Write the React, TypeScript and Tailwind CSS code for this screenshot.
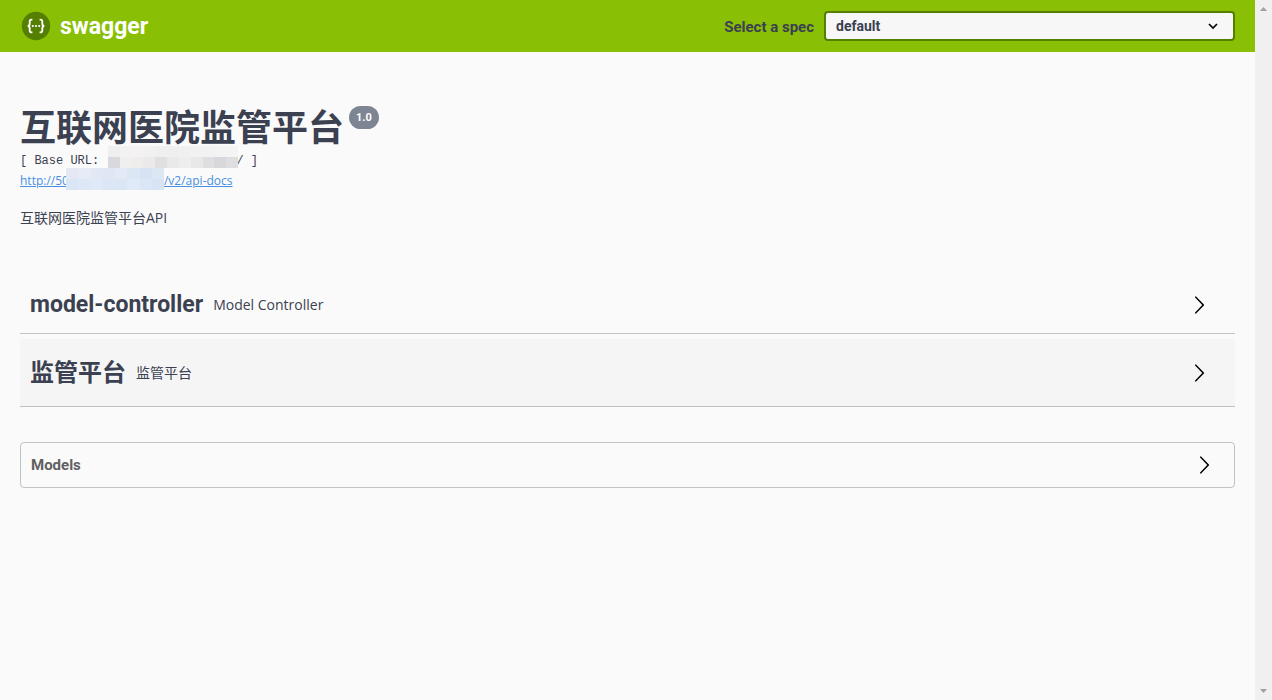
import type { ReactNode } from "react";

const tags = [
  { name: "model-controller", description: "Model Controller", rowClass: "h-[54px] pb-[3px]", nameClass: "text-[23px]" },
  { name: "监管平台", description: "监管平台", rowClass: "h-[68px] bg-black/[0.02]", nameClass: "text-2xl" },
];

const hostTop = ["#efefef", "#f2f2f2", "#f3f1f1", "#f1f1f1", "#efefef", "#efeff0", "#f0f0f0", "#f1f1f1", "#f2f2f2", "#f3f3f3", "#f4f4f4"];
const hostBottom = ["#d9d8dc", "#f0eeee", "#efedec", "#ebe9e9", "#e0dfe2", "#e9e9e9", "#eeeeee", "#e9e8e8", "#dfdee1", "#d8d7dc", "#dedde0"];
const linkTop = ["#e3e8f4", "#e6ebf6", "#e1e8f4", "#dfe7f4", "#e2eaf6", "#dde6f4", "#d7e2f4", "#dde6f3"];
const linkBottom = ["#dbe6f4", "#dde8f6", "#dfe9f7", "#dce7f6", "#dbe6f5", "#dfe9f7", "#dae6f5", "#d8e3f3"];

function Mosaic({ rows, className }: { rows: string[][]; className: string }) {
  return (
    <svg className={className} viewBox={`0 0 ${rows[0].length * 12} 24`} preserveAspectRatio="none" shapeRendering="crispEdges" aria-hidden="true">
      {rows.map((row, y) =>
        row.map((fill, x) => <rect key={`${x}-${y}`} x={x * 12} y={y * 12} width="12" height="12" fill={fill} />),
      )}
    </svg>
  );
}

function Arrow() {
  return (
    <svg className="h-5 w-5 shrink-0" viewBox="0 0 20 20" aria-hidden="true">
      <path
        fill="#000"
        d="M13.25 10L6.109 2.58c-.268-.27-.268-.707 0-.979.268-.27.701-.27.969 0l7.83 7.908c.268.271.268.709 0 .979l-7.83 7.908c-.268.271-.701.27-.969 0-.268-.269-.268-.707 0-.979L13.25 10z"
      />
    </svg>
  );
}

function Logo() {
  return (
    <a href="#" className="flex items-center gap-2 text-white">
      <svg className="h-8 w-8" viewBox="0 0 32 32" aria-hidden="true">
        <circle cx="16" cy="16" r="14.2" fill="#547f00" />
        <g fill="none" stroke="#fff" strokeWidth="1.8">
          <path d="M12.4 9.7h-.8c-1.3 0-1.9.6-1.9 1.9v2.1c0 1.4-.6 2.1-1.9 2.3 1.3.2 1.9.9 1.9 2.3v2.1c0 1.3.6 1.9 1.9 1.9h.8" />
          <path d="M19.6 9.7h.8c1.3 0 1.9.6 1.9 1.9v2.1c0 1.4.6 2.1 1.9 2.3-1.3.2-1.9.9-1.9 2.3v2.1c0 1.3-.6 1.9-1.9 1.9h-.8" />
        </g>
        <g fill="#fff">
          <circle cx="12.8" cy="16" r="1.1" />
          <circle cx="16" cy="16" r="1.1" />
          <circle cx="19.2" cy="16" r="1.1" />
        </g>
      </svg>
      <span className="pt-[2px] text-[23px] font-bold">swagger</span>
    </a>
  );
}

function TopBar() {
  return (
    <header className="flex h-[52px] items-center justify-between bg-[#89bf04] px-5">
      <Logo />
      <div className="flex items-center gap-[10px]">
        <label htmlFor="spec" className="pt-[2px] text-[15px] font-bold">
          Select a spec
        </label>
        <div className="relative">
          <select
            id="spec"
            defaultValue="default"
            className="block h-[30px] w-[411px] appearance-none rounded border-2 border-[#547f00] bg-[#f7f7f7] px-[10px] text-sm font-bold"
          >
            <option value="default">default</option>
          </select>
          <svg className="pointer-events-none absolute top-[9px] right-4 h-3 w-3" viewBox="0 0 12 12" aria-hidden="true">
            <path d="M2 4l4 4 4-4" fill="none" stroke="#000" strokeWidth="1.7" />
          </svg>
        </div>
      </div>
    </header>
  );
}

function Info() {
  return (
    <section className="pt-[54px]">
      <h1 className="flex items-start gap-[5px] text-4xl/[46px] font-bold">
        互联网医院监管平台
        <span className="rounded-full bg-[#7d8492] px-[7px] text-[11px]/[23px] text-white">1.0</span>
      </h1>
      <pre className="flex text-xs/[18px] font-['Liberation_Mono','Noto_Sans_CJK_SC',monospace]">
        [ Base URL:{" "}
        <span className="relative w-[130px]">
          <Mosaic rows={[hostTop, hostBottom]} className="absolute -top-[6px] left-[2px] h-[22px] w-[130px]" />
        </span>
        / ]
      </pre>
      <a
        href="#api-docs"
        className="flex w-fit text-xs/[22px] text-[#4990e2] underline font-['Open_Sans','Noto_Sans_CJK_SC',sans-serif]"
      >
        http://50
        <span className="relative w-[95px]">
          <Mosaic rows={[linkTop, linkBottom]} className="absolute -top-[2px] right-0 h-[22px] w-[98px]" />
        </span>
        /v2/api-docs
      </a>
      <p className="mt-4 text-sm/5 font-['Open_Sans','Noto_Sans_CJK_SC',sans-serif]">互联网医院监管平台API</p>
    </section>
  );
}

function TagRow({ className, children }: { className: string; children: ReactNode }) {
  return (
    <button type="button" className={`flex w-full items-center border-b border-[#3b4151]/30 pr-[26px] pl-[10px] text-left ${className}`}>
      {children}
      <Arrow />
    </button>
  );
}

export default function App() {
  return (
    <div className="flex min-h-screen bg-[#fafafa] text-[#3b4151] font-[Roboto,'Noto_Sans_CJK_SC',sans-serif]">
      <div className="min-w-0 flex-1">
        <TopBar />
        <main className="px-5">
          <Info />
          <div className="mt-[52px] flex flex-col gap-[5px]">
            {tags.map((tag) => (
              <TagRow key={tag.name} className={tag.rowClass}>
                <span className={`font-bold ${tag.nameClass}`}>{tag.name}</span>
                <span className="flex-1 px-[10px] text-sm font-['Open_Sans','Noto_Sans_CJK_SC',sans-serif]">
                  {tag.description}
                </span>
              </TagRow>
            ))}
          </div>
          <button
            type="button"
            className="mt-[35px] flex h-[46px] w-full items-center justify-between rounded border border-[#3b4151]/30 pr-5 pl-[10px] text-[15px] font-bold text-[#606060]"
          >
            Models
            <Arrow />
          </button>
        </main>
      </div>
      <div className="flex w-[17px] flex-col items-center justify-between bg-[#f0f0f0] py-[7px]" aria-hidden="true">
        <svg className="h-1 w-[7px]" viewBox="0 0 7 4">
          <path d="M0 4L3.5 0 7 4z" fill="#a0a0a0" />
        </svg>
        <svg className="h-1 w-[7px]" viewBox="0 0 7 4">
          <path d="M0 0L3.5 4 7 0z" fill="#a0a0a0" />
        </svg>
      </div>
    </div>
  );
}
